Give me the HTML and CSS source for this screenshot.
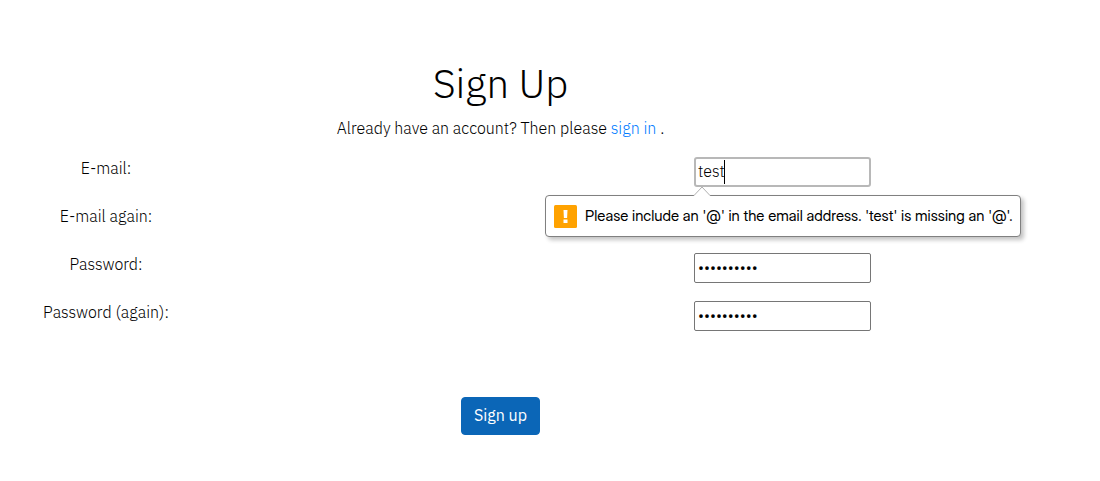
FILE: index.html
```html
<!DOCTYPE html>
<html lang="en">
<head>
<meta charset="utf-8">
<meta name="viewport" content="width=device-width, initial-scale=1">
<title>Sign Up</title>
<link rel="stylesheet" href="styles.css">
</head>
<body>
<main class="signup">
  <h1 class="title">Sign Up</h1>
  <p class="intro">Already have an account? Then please <a class="link" href="#">sign in</a> .</p>
  <form novalidate>
    <div class="row">
      <label class="label" for="email">E-mail:</label>
      <div class="field">
        <input class="input input-focused" id="email" type="email" value="test" aria-describedby="email-error">
        <span class="caret"></span>
        <div class="bubble" id="email-error" role="alert">
          <svg class="pointer" width="18" height="10" viewBox="0 0 18 10" aria-hidden="true"><path d="M1 9.5 9 1l8 8.5V10H1z" fill="#fff"/><path d="M1 9.5 9 1l8 8.5" fill="none" stroke="#b0b0b0"/></svg>
          <svg class="warning" width="23" height="23" viewBox="0 0 23 23" aria-hidden="true"><rect width="23" height="23" rx="1.5" fill="#ffa200"/><path d="M9.5 5h4l-.4 8h-3.2zM9.5 14.5h4v3.5h-4z" fill="#fff"/></svg>
          <span>Please include an '@' in the email address. 'test' is missing an '@'.</span>
        </div>
      </div>
    </div>
    <div class="row">
      <label class="label" for="email2">E-mail again:</label>
      <div class="field"><input class="input" id="email2" type="email"></div>
    </div>
    <div class="row">
      <label class="label" for="password">Password:</label>
      <div class="field"><input class="input" id="password" type="password" value="abcdefghij"></div>
    </div>
    <div class="row">
      <label class="label" for="password2">Password (again):</label>
      <div class="field"><input class="input" id="password2" type="password" value="abcdefghij"></div>
    </div>
    <button class="submit" type="submit">Sign up</button>
  </form>
</main>
</body>
</html>
```
FILE: styles.css
```css
* { box-sizing: border-box; }
body {
  margin: 0;
  background: #fff;
  color: #000;
  font: 300 16px/24px "IBM Plex Sans", Roboto, sans-serif;
}
.signup { width: 91%; padding: 60px 0 46px; text-align: center; }
.title { margin: 0 0 10px; font-size: 40px; line-height: 46px; font-weight: 300; }
.intro { margin: 0 0 16px; }
.link { color: #007bff; text-decoration: none; }
.row {
  display: grid;
  grid-template-columns: 212fr 352fr 437fr;
  height: 32px;
  margin-bottom: 16px;
}
.label { grid-column: 1; }
.field { grid-column: 3; position: relative; justify-self: center; align-self: center; display: flex; }
.input {
  width: 177px;
  height: 30px;
  padding: 0 3px 2px;
  border: 1px solid #767676;
  border-radius: 2px;
  background: #fff;
  color: #000;
  font: inherit;
  outline: none;
}
.input-focused { padding: 0 2px 2px; border: 2px solid #b8b8b8; border-radius: 3px; }
.caret { position: absolute; left: 30px; top: 3px; width: 1px; height: 24px; background: #000; }
.bubble {
  position: absolute;
  z-index: 1;
  left: -149px;
  top: 38px;
  display: flex;
  align-items: center;
  gap: 8px;
  height: 42px;
  padding: 0 8px;
  border: 1px solid #808080;
  border-radius: 4px;
  background: #fff;
  box-shadow: 3px 3px 4px rgba(0, 0, 0, 0.24);
  font: 400 15px/20px "Inter Display", Inter, sans-serif;
  white-space: nowrap;
}
.pointer { position: absolute; left: 147px; top: -10px; }
.warning { flex: none; }
.submit {
  margin-top: 49px;
  padding: 5px 12px 7px;
  border: 1px solid #0b66b7;
  border-radius: 4px;
  background: #0b66b7;
  color: #fff;
  font: 400 16px/24px "IBM Plex Sans", Roboto, sans-serif;
}
```
